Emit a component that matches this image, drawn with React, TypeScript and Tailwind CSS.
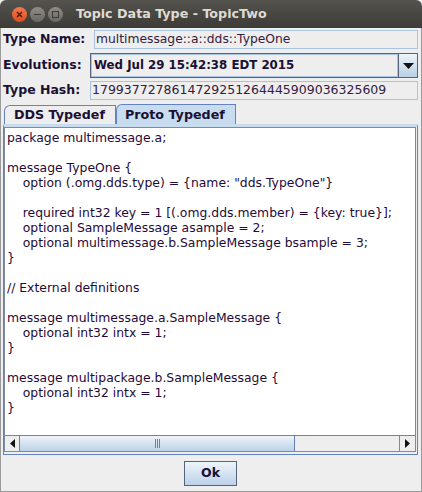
const code = `package multimessage.a;

message TypeOne {
    option (.omg.dds.type) = {name: "dds.TypeOne"}

    required int32 key = 1 [(.omg.dds.member) = {key: true}];
    optional SampleMessage asample = 2;
    optional multimessage.b.SampleMessage bsample = 3;
}

// External definitions

message multimessage.a.SampleMessage {
    optional int32 intx = 1;
}

message multipackage.b.SampleMessage {
    optional int32 intx = 1;
}`;

function Arrow({ dir }: { dir: "left" | "right" | "down" }) {
  const p = dir === "left" ? "M5 0V9L0 4.5Z" : dir === "right" ? "M0 0V9L5 4.5Z" : "M0 0H11L5.5 6Z";
  return (
    <svg width={dir === "down" ? 11 : 5} height={dir === "down" ? 6 : 9} viewBox={dir === "down" ? "0 0 11 6" : "0 0 5 9"}>
      <path d={p} fill="#111" />
    </svg>
  );
}

export default function App() {
  return (
    <div className="w-[422px] h-[492px] flex flex-col overflow-hidden bg-[#eeeeee] text-[#1a1033] font-['DejaVu_Sans',sans-serif]">
      <div className="h-[28px] shrink-0 flex items-center rounded-t-[6px] bg-gradient-to-b from-[#55534e] to-[#3c3b37] pl-[12px]">
        <div className="w-[15px] h-[15px] rounded-full bg-gradient-to-b from-[#f37a4a] to-[#dd4a1e] flex items-center justify-center">
          <svg width="7" height="7" viewBox="0 0 7 7"><path d="M1 1L6 6M6 1L1 6" stroke="#4a1c0c" strokeWidth="1.4" /></svg>
        </div>
        <div className="ml-[3px] w-[15px] h-[15px] rounded-full bg-gradient-to-b from-[#8e8c85] to-[#6a6862] flex items-center justify-center">
          <div className="w-[7px] h-[1px] bg-[#3c3b37]" />
        </div>
        <div className="ml-[3px] w-[15px] h-[15px] rounded-full bg-gradient-to-b from-[#8e8c85] to-[#6a6862] flex items-center justify-center">
          <div className="w-[7px] h-[7px] border border-[#3c3b37]" />
        </div>
        <div className="ml-[13px] text-[12.7px] font-bold text-[#dfdbd2] whitespace-nowrap">Topic Data Type - TopicTwo</div>
      </div>

      <div className="flex-1 flex flex-col min-h-0 border-x border-b border-[#9a9a9a] pl-[2px] pr-[3px]">
        <div className="h-[19px] mt-[2px] shrink-0 flex items-center">
          <div className="w-[91px] text-[12.5px] font-bold whitespace-nowrap">Type Name:</div>
          <div className="flex-1 h-[19px] border border-[#a8c4e0] flex items-center pl-[1px] text-[12.3px] text-[#33203f] whitespace-nowrap overflow-hidden">multimessage::a::dds::TypeOne</div>
        </div>
        <div className="h-[25px] mt-[4px] shrink-0 flex items-center">
          <div className="w-[87px] text-[12.5px] font-bold whitespace-nowrap">Evolutions:</div>
          <div className="flex-1 h-[25px] border border-[#55637d] flex items-center">
            <div className="flex-1 h-full flex items-center border border-[#a8c4e0] pl-[2px] text-[11.8px] font-bold whitespace-nowrap">Wed Jul 29 15:42:38 EDT 2015</div>
            <div className="w-[19px] h-full shrink-0 border-l border-[#55637d] bg-gradient-to-b from-[#eef4fa] to-[#b8cfe5] flex items-center justify-center">
              <Arrow dir="down" />
            </div>
          </div>
        </div>
        <div className="h-[19px] mt-[3px] shrink-0 flex items-center">
          <div className="w-[87px] text-[12.5px] font-bold whitespace-nowrap">Type Hash:</div>
          <div className="flex-1 h-[19px] border border-[#a8c4e0] flex items-center pl-[1px] text-[12.5px] text-[#33203f] whitespace-nowrap overflow-hidden">1799377278614729251264445909036325609</div>
        </div>

        <div className="h-[20px] mt-[4px] shrink-0 flex items-end pl-[1px]">
          <div className="w-[112px] h-[19px] border border-b-0 border-[#6382bf] rounded-tl-[6px] flex items-center pl-[9px] text-[12.7px] font-bold whitespace-nowrap">DDS Typedef</div>
          <div className="w-[120px] h-[20px] border border-b-0 border-[#6382bf] rounded-tl-[6px] bg-[#c8dcf0] flex items-center pl-[8px] text-[12.7px] font-bold whitespace-nowrap">Proto Typedef</div>
        </div>

        <div className="flex-1 min-h-0 flex flex-col border border-[#6382bf] border-t-[3px] border-t-[#c8dcf0] pr-[1px] pb-[2px]">
          <div className="flex-1 min-h-0 flex flex-col border border-[#7a8aa8]">
            <div className="flex-1 min-h-0 bg-white pl-[2px] pt-[2px] overflow-hidden">
              <pre className="font-['DejaVu_Sans',sans-serif] text-[12.4px] leading-[15px] text-[#1f0a38]">{code}</pre>
            </div>
            <div className="h-[16px] shrink-0 flex border-t border-[#6382bf] bg-[#eeeeee]">
              <div className="w-[15px] shrink-0 border-r border-[#6382bf] flex items-center justify-center"><Arrow dir="left" /></div>
              <div className="w-[275px] shrink-0 border-r border-[#6382bf] bg-gradient-to-b from-[#eef4fa] to-[#bcd2e8] flex items-center justify-center">
                <div className="w-[5px] h-[9px] border-x border-[#6382bf] flex justify-center"><div className="w-[1px] h-full bg-[#6382bf]" /></div>
              </div>
              <div className="flex-1" />
              <div className="w-[16px] shrink-0 border-l border-[#7a8aa8] flex items-center justify-center"><Arrow dir="right" /></div>
            </div>
          </div>
        </div>

        <div className="h-[36px] shrink-0 flex items-center justify-center">
          <div className="w-[53px] h-[25px] border border-[#55637d] bg-gradient-to-b from-[#eef4fa] to-[#bcd2e8] flex items-center justify-center text-[12.5px] font-bold">Ok</div>
        </div>
      </div>
    </div>
  );
}
